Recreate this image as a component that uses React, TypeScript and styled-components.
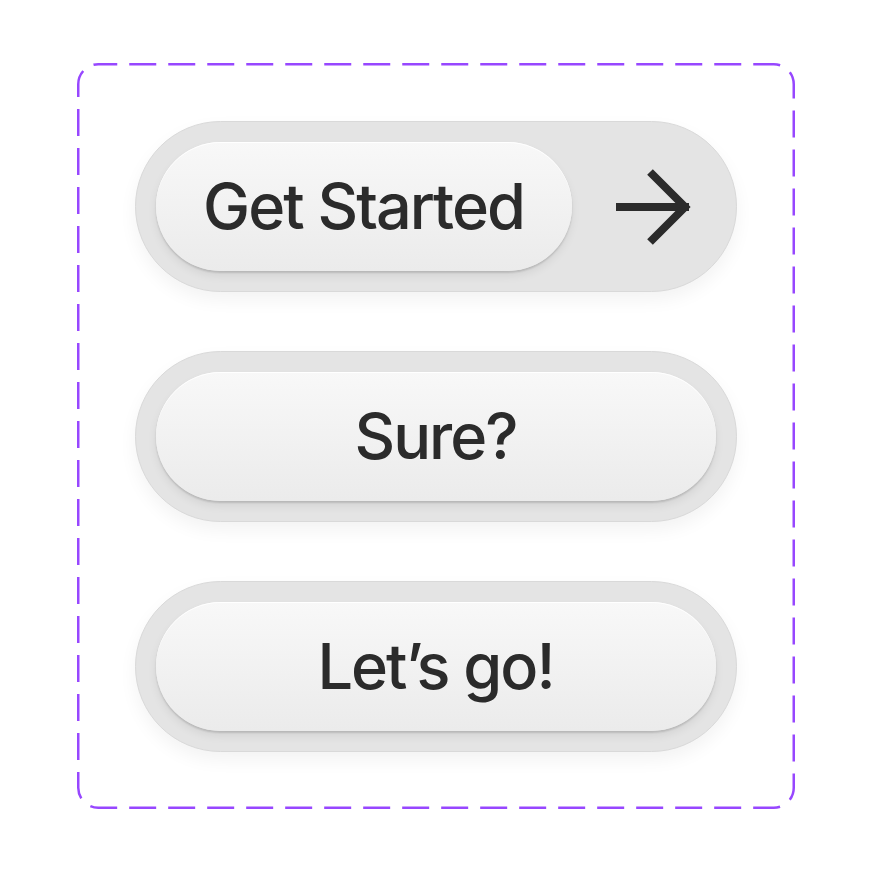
import React from "react";
import styled, { createGlobalStyle } from "styled-components";

const GlobalStyle = createGlobalStyle`
  html, body { margin: 0; padding: 0; background: #ffffff; }
  body { font-family: Inter, "Noto Sans", sans-serif; }
`;

const Page = styled.div`
  width: 871px;
  height: 871px;
  display: flex;
  align-items: center;
  justify-content: center;
`;

const Frame = styled.div`
  position: relative;
  box-sizing: border-box;
  width: 718px;
  height: 746px;
  padding: 58px;
  display: flex;
  flex-direction: column;
  gap: 59px;
`;

const DashedOutline = styled.svg`
  position: absolute;
  inset: 0;
  width: 718px;
  height: 746px;
  pointer-events: none;
  overflow: visible;
`;

const Track = styled.div<{ $withIcon?: boolean }>`
  box-sizing: border-box;
  height: 171px;
  border-radius: 999px;
  background: #e4e4e4;
  border: 1px solid #d9d9d9;
  box-shadow: 0 8px 18px rgba(0, 0, 0, 0.05);
  padding: 20px ${(p) => (p.$withIcon ? "0" : "20px")} 20px 20px;
  display: flex;
  align-items: center;
`;

const Knob = styled.div<{ $width?: number }>`
  box-sizing: border-box;
  height: 129px;
  ${(p) => (p.$width ? `width: ${p.$width}px; flex: none;` : "flex: 1;")}
  border-radius: 999px;
  background: linear-gradient(180deg, #f8f8f8 0%, #f1f1f1 55%, #ebebeb 100%);
  box-shadow: inset 0 1px 0 rgba(255, 255, 255, 0.9),
    0 2px 2px rgba(0, 0, 0, 0.14), 0 5px 10px rgba(0, 0, 0, 0.07);
  display: flex;
  align-items: center;
  justify-content: center;
`;

const Label = styled.span`
  font-family: Inter, "Noto Sans", sans-serif;
  font-size: 63px;
  font-weight: 450;
  color: #2b2b2b;
  letter-spacing: -2px;
  line-height: 1;
`;

const IconSlot = styled.div`
  flex: 1;
  display: flex;
  align-items: center;
  justify-content: center;
  padding-top: 2px;
`;

const Arrow = () => (
  <svg width="80" height="80" viewBox="0 0 80 80" fill="none">
    <path d="M2 40 H75" stroke="#2b2b2b" strokeWidth="8" />
    <path d="M36 5 L71 40 L36 75" stroke="#2b2b2b" strokeWidth="8" strokeLinejoin="miter" />
  </svg>
);

export default function App() {
  return (
    <>
      <GlobalStyle />
      <Page>
        <Frame>
          <DashedOutline viewBox="0 0 718 746">
            <rect
              x="1.25"
              y="1.25"
              width="715.5"
              height="743.5"
              rx="20"
              ry="20"
              fill="none"
              stroke="#9747FF"
              strokeWidth="2.5"
              strokeDasharray="27 12"
              strokeDashoffset="8"
            />
          </DashedOutline>
          <Track $withIcon>
            <Knob $width={416}>
              <Label>Get Started</Label>
            </Knob>
            <IconSlot>
              <Arrow />
            </IconSlot>
          </Track>
          <Track>
            <Knob>
              <Label>Sure?</Label>
            </Knob>
          </Track>
          <Track>
            <Knob>
              <Label>Let’s go!</Label>
            </Knob>
          </Track>
        </Frame>
      </Page>
    </>
  );
}
